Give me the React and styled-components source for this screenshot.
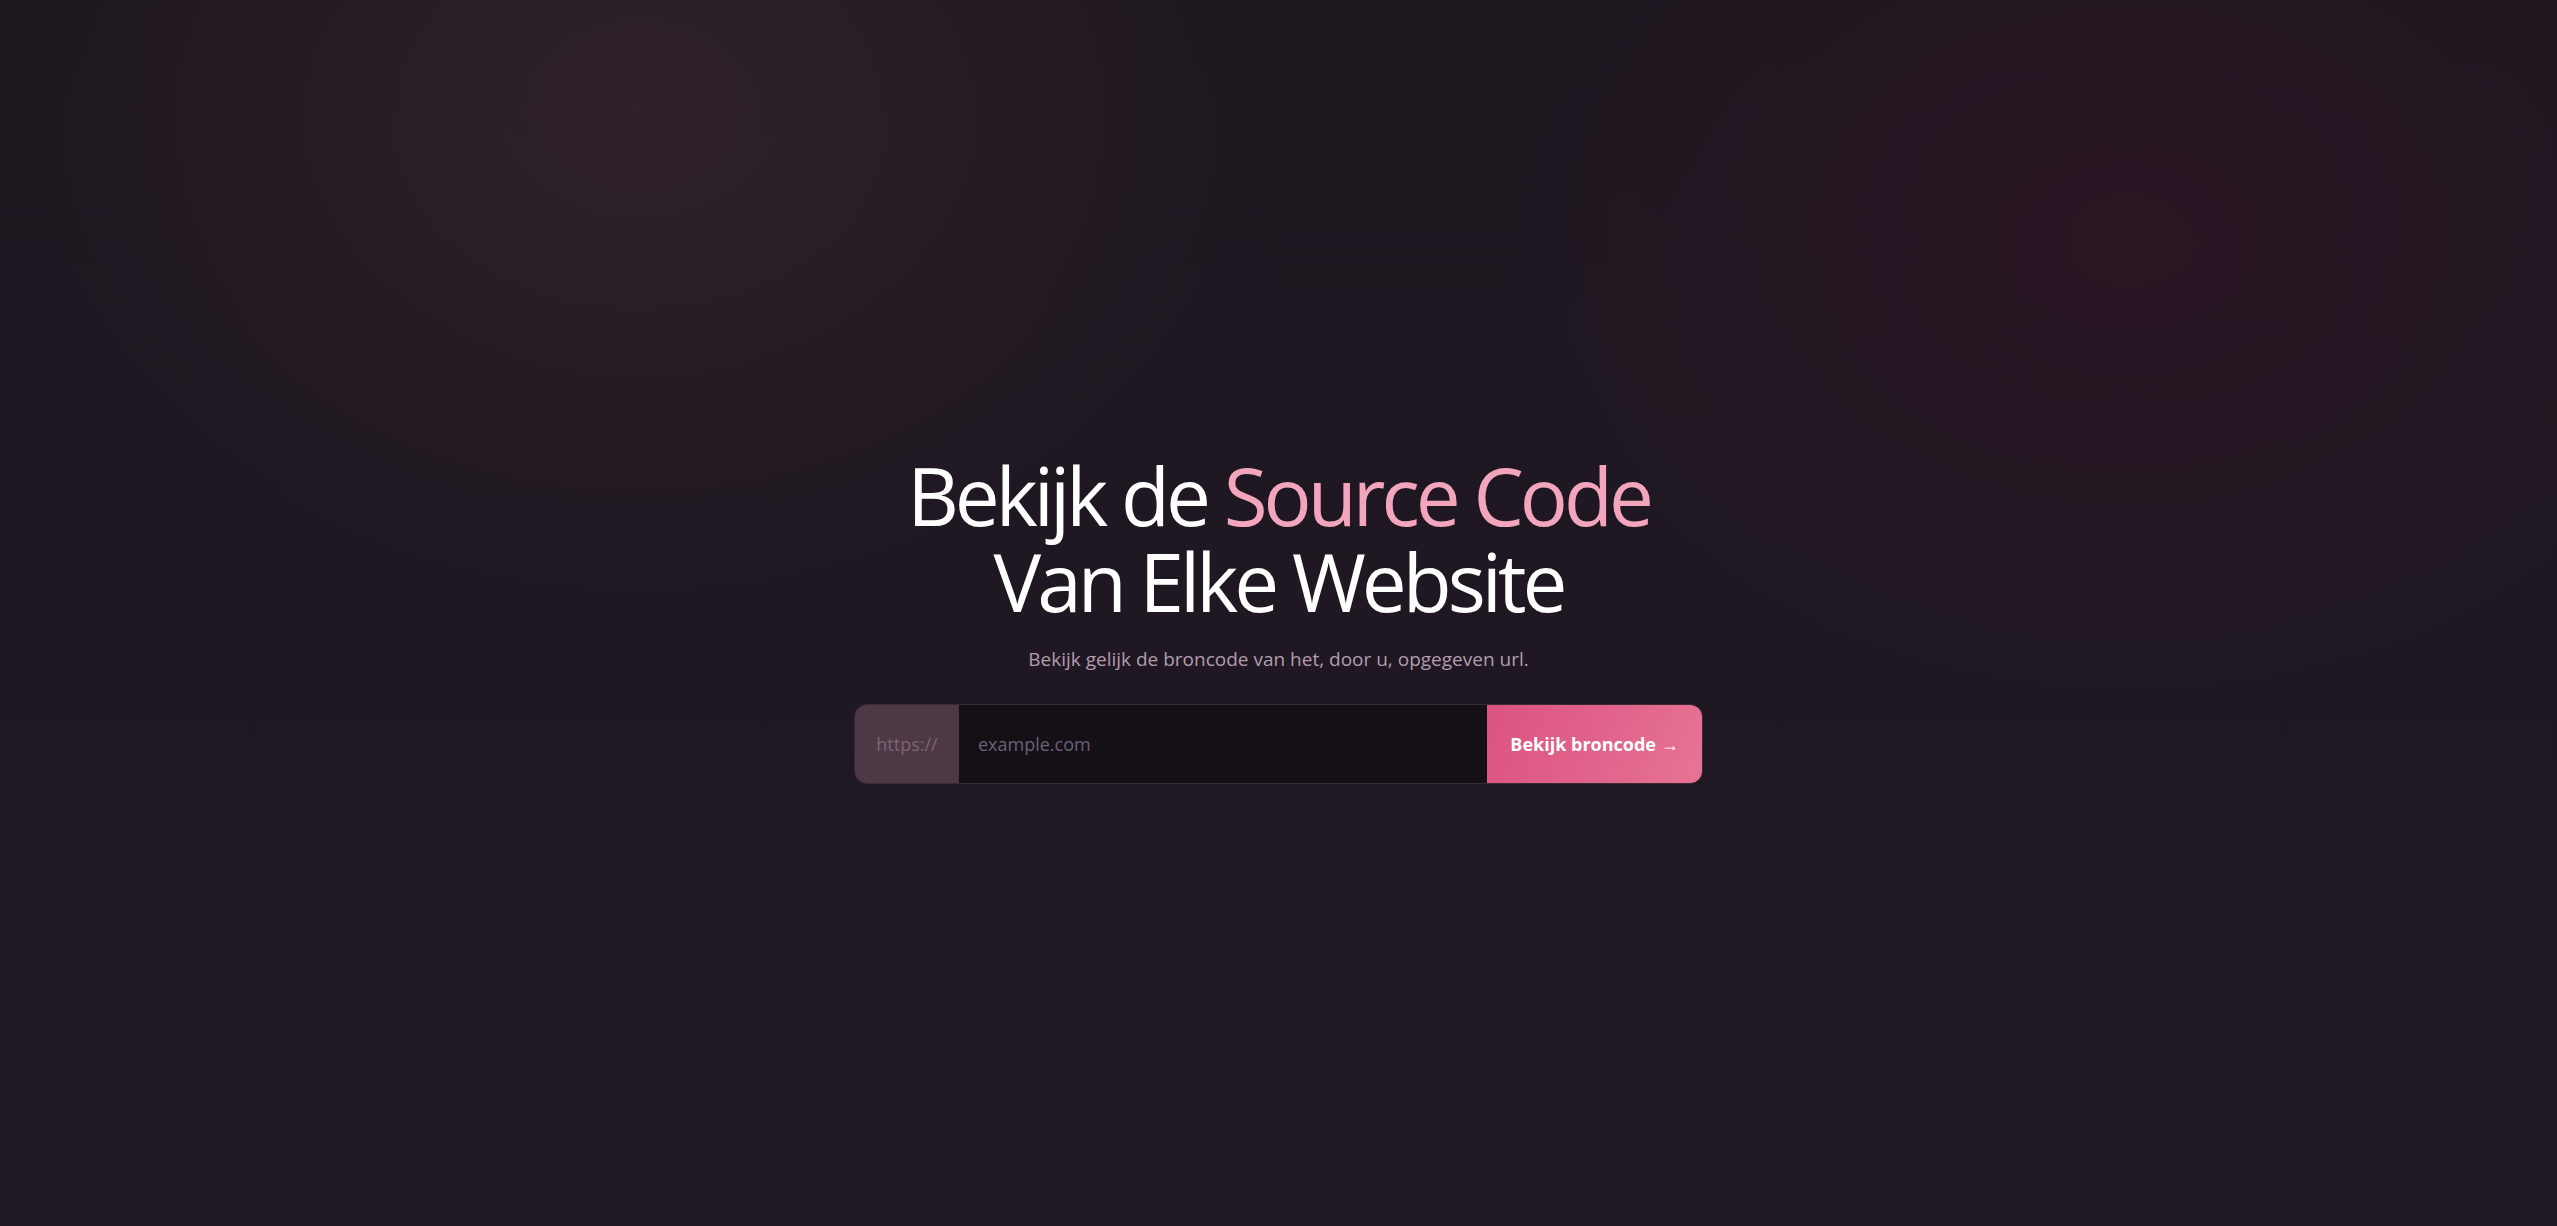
import React from "react";
import styled, { createGlobalStyle } from "styled-components";

const GlobalStyle = createGlobalStyle`
  html, body {
    margin: 0;
    padding: 0;
    height: 100%;
  }
  body {
    background: #1d1720;
    font-family: "Open Sans", "Noto Sans", sans-serif;
  }
  #root {
    min-height: 100vh;
  }
`;

const Page = styled.main`
  min-height: 100vh;
  box-sizing: border-box;
  padding-top: 10px;
  display: flex;
  align-items: center;
  justify-content: center;
  background:
    radial-gradient(ellipse 900px 700px at 640px 110px, rgba(52, 36, 44, 0.75), transparent 70%),
    radial-gradient(ellipse 900px 650px at 2130px 240px, rgba(50, 22, 38, 0.55), transparent 70%),
    linear-gradient(180deg, #1e1720 0%, #1f1822 55%, #201a25 100%);
`;

const Hero = styled.section`
  display: flex;
  flex-direction: column;
  align-items: center;
  text-align: center;
`;

const Title = styled.h1`
  margin: 0;
  font-size: 80px;
  font-weight: 400;
  line-height: 86px;
  letter-spacing: -4px;
  color: #ffffff;
`;

const Accent = styled.span`
  color: #f2a5bc;
`;

const Subtitle = styled.p`
  margin: 22px 0 0;
  font-size: 19px;
  line-height: 26px;
  color: #b29cb0;
`;

const Form = styled.form`
  margin-top: 32px;
  display: flex;
  width: 849px;
  height: 80px;
  border: 1px solid #3b2b37;
  border-radius: 13px;
  overflow: hidden;
  box-sizing: border-box;
`;

const Prefix = styled.span`
  display: flex;
  align-items: center;
  justify-content: center;
  width: 104px;
  flex-shrink: 0;
  background: #4e3846;
  color: #7b6572;
  font-size: 18px;
`;

const UrlInput = styled.input`
  flex: 1;
  min-width: 0;
  border: none;
  outline: none;
  background: #141016;
  padding: 0 19px;
  font-family: inherit;
  font-size: 18px;
  color: #ddd;
  &::placeholder {
    color: #6c6176;
  }
`;

const Submit = styled.button`
  width: 215px;
  flex-shrink: 0;
  border: none;
  cursor: pointer;
  background: linear-gradient(110deg, #db5480 0%, #e0628a 50%, #e77495 100%);
  color: #ffffff;
  font-family: inherit;
  font-size: 18px;
  font-weight: 700;
`;

export default function App() {
  return (
    <>
      <GlobalStyle />
      <Page>
        <Hero>
          <Title>
            Bekijk de <Accent>Source Code</Accent>
            <br />
            Van Elke Website
          </Title>
          <Subtitle>Bekijk gelijk de broncode van het, door u, opgegeven url.</Subtitle>
          <Form onSubmit={(e) => e.preventDefault()}>
            <Prefix>https://</Prefix>
            <UrlInput type="text" placeholder="example.com" />
            <Submit type="submit">Bekijk broncode →</Submit>
          </Form>
        </Hero>
      </Page>
    </>
  );
}
